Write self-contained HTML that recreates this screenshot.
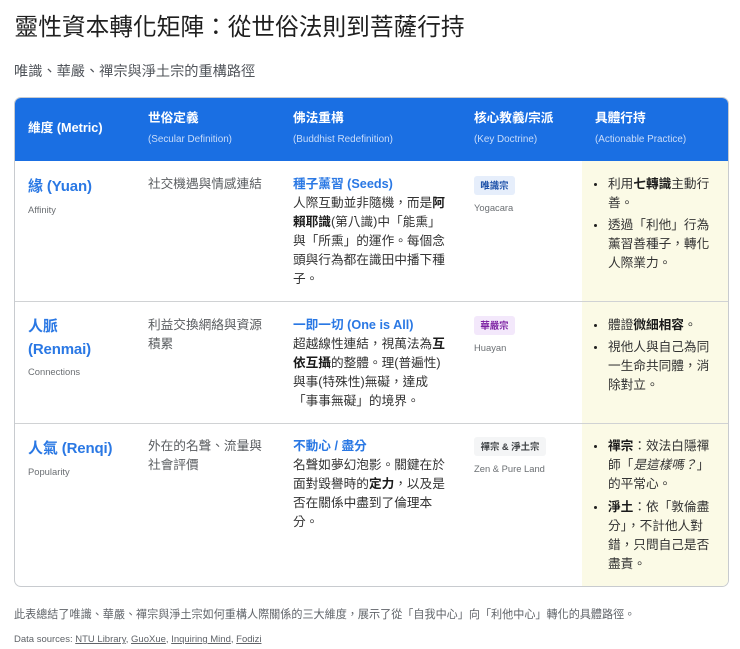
<!DOCTYPE html>
<html lang="zh-Hant"><head><meta charset="utf-8">
<style>
html,body{margin:0;padding:0;width:740px;height:649px;background:#fff;overflow:hidden}
body{position:relative;font-family:"Liberation Sans","Noto Sans CJK TC",sans-serif;color:#1f1f1f;filter:blur(.3px)}
.a{position:absolute;white-space:nowrap}
.t{font-size:12.67px;line-height:19px;color:#333;margin-top:1px}
.g{color:#5a5d60}
b{font-weight:700;color:#1a1a1a}
.h{font-size:12.67px;font-weight:700;color:#fff;line-height:19px}
.hs{font-size:9.9px;color:#c9dcfa;line-height:14px}
.m{font-size:15px;font-weight:700;color:#2a78e4;line-height:23px;letter-spacing:-.15px}
.s{font-size:9.4px;color:#6b6f73;line-height:14px}
.bl{font-size:12.67px;font-weight:700;color:#2a78e4;line-height:19px;margin-top:1px}
.tag{font-size:9.4px;font-weight:700;border-radius:3px;height:19px;line-height:19px;text-align:center}
.d{position:absolute;width:3px;height:3px;border-radius:50%;background:#1f1f1f}
</style></head><body>
<div class="a" style="left:14.5px;top:11px;font-size:23.7px;line-height:34px;color:#1f1f1f">靈性資本轉化矩陣&#65306;從世俗法則到菩薩行持</div>
<div class="a" style="left:14px;top:61.5px;font-size:14.2px;line-height:21px;color:#50545a">唯識、華嚴、禪宗與淨土宗的重構路徑</div>

<div class="a" style="left:14px;top:97px;width:713px;height:488px;border:1px solid #c8cbcf;border-radius:7px;overflow:hidden;background:#fff">
  <div style="position:absolute;left:-1px;top:-1px;width:715px;height:64px;background:#1a6fe3"></div>
  <div style="position:absolute;left:567px;top:63px;width:146px;height:425px;background:#fbfae6"></div>
  <div style="position:absolute;left:0;top:203px;width:713px;height:1px;background:#d0d2d4"></div>
  <div style="position:absolute;left:0;top:325px;width:713px;height:1px;background:#d0d2d4"></div>
</div>

<div class="a h" style="left:28px;top:119px">維度 (Metric)</div>
<div class="a h" style="left:148px;top:109px">世俗定義</div><div class="a hs" style="left:148px;top:133px">(Secular Definition)</div>
<div class="a h" style="left:293px;top:109px">佛法重構</div><div class="a hs" style="left:293px;top:133px">(Buddhist Redefinition)</div>
<div class="a h" style="left:474px;top:109px">核心教義/宗派</div><div class="a hs" style="left:474px;top:133px">(Key Doctrine)</div>
<div class="a h" style="left:595px;top:109px">具體行持</div><div class="a hs" style="left:595px;top:133px">(Actionable Practice)</div>

<div class="a m" style="left:28px;top:174.5px">緣 (Yuan)</div>
<div class="a s" style="left:28px;top:202.5px">Affinity</div>
<div class="a t g" style="left:148px;top:174px">社交機遇與情感連結</div>
<div class="a bl" style="left:293px;top:174px">種子薰習 (Seeds)</div>
<div class="a t" style="left:293px;top:193px">人際互動並非隨機&#65292;而是<b>阿</b><br><b>賴耶識</b>(第八識)中「能熏」<br>與「所熏」的運作。每個念<br>頭與行為都在識田中播下種<br>子。</div>
<div class="a tag" style="left:474px;top:176px;width:41px;background:#e6eefb;color:#1b4fa8">唯識宗</div>
<div class="a s" style="left:474px;top:201px">Yogacara</div>
<div class="d" style="left:594px;top:183px"></div><div class="d" style="left:594px;top:224px"></div>
<div class="a t" style="left:608px;top:174px">利用<b>七轉識</b>主動行<br>善。</div>
<div class="a t" style="left:608px;top:215px">透過「利他」行為<br>薰習善種子&#65292;轉化<br>人際業力。</div>

<div class="a m" style="left:28px;top:314.5px">人脈<br>(Renmai)</div>
<div class="a s" style="left:28px;top:365px">Connections</div>
<div class="a t g" style="left:148px;top:315px">利益交換網絡與資源<br>積累</div>
<div class="a bl" style="left:293px;top:315px">一即一切 (One is All)</div>
<div class="a t" style="left:293px;top:334px">超越線性連結&#65292;視萬法為<b>互</b><br><b>依互攝</b>的整體。理(普遍性)<br>與事(特殊性)無礙&#65292;達成<br>「事事無礙」的境界。</div>
<div class="a tag" style="left:474px;top:316px;width:41px;background:#f3e8fb;color:#7b1fa2">華嚴宗</div>
<div class="a s" style="left:474px;top:341px">Huayan</div>
<div class="d" style="left:594px;top:324px"></div><div class="d" style="left:594px;top:346px"></div>
<div class="a t" style="left:608px;top:315px">體證<b>微細相容</b>。</div>
<div class="a t" style="left:608px;top:337px">視他人與自己為同<br>一生命共同體&#65292;消<br>除對立。</div>

<div class="a m" style="left:28px;top:436.5px">人氣 (Renqi)</div>
<div class="a s" style="left:28px;top:465px">Popularity</div>
<div class="a t g" style="left:148px;top:436px">外在的名聲、流量與<br>社會評價</div>
<div class="a bl" style="left:293px;top:435.5px">不動心 / 盡分</div>
<div class="a t" style="left:293px;top:455px">名聲如夢幻泡影。關鍵在於<br>面對毀譽時的<b>定力</b>&#65292;以及是<br>否在關係中盡到了倫理本<br>分。</div>
<div class="a tag" style="left:474px;top:437px;width:72px;background:#f4f5f6;color:#3c4043">禪宗 &amp; 淨土宗</div>
<div class="a s" style="left:474px;top:462px">Zen &amp; Pure Land</div>
<div class="d" style="left:594px;top:445px"></div><div class="d" style="left:594px;top:506px"></div>
<div class="a t" style="left:608px;top:436px"><b>禪宗</b>&#65306;效法白隱禪<br>師「<i>是這樣嗎&#65311;</i>」<br>的平常心。</div>
<div class="a t" style="left:608px;top:497px"><b>淨土</b>&#65306;依「敦倫盡<br>分」&#65292;不計他人對<br>錯&#65292;只問自己是否<br>盡責。</div>

<div class="a" style="left:14px;top:606.5px;font-size:11.1px;line-height:16px;color:#5f6368">此表總結了唯識、華嚴、禪宗與淨土宗如何重構人際關係的三大維度&#65292;展示了從「自我中心」向「利他中心」轉化的具體路徑。</div>
<div class="a" style="left:14px;top:633px;font-size:9.5px;line-height:14px;color:#5f6368">Data sources: <u>NTU Library</u>, <u>GuoXue</u>, <u>Inquiring Mind</u>, <u>Fodizi</u></div>
</body></html>
